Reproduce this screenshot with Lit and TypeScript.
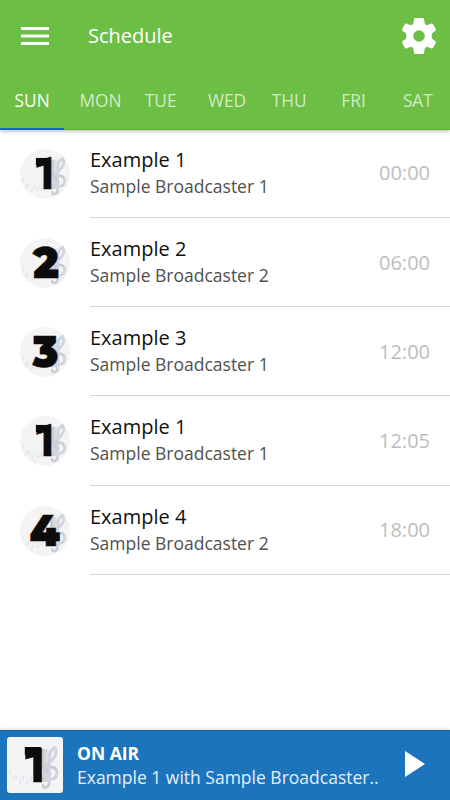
import { LitElement, html, css, svg, nothing } from "lit";
import { customElement, property } from "lit/decorators.js";

interface Show {
  art: string;
  title: string;
  host: string;
  time: string;
}

const SHOWS: Show[] = [
  { art: "1", title: "Example 1", host: "Sample Broadcaster 1", time: "00:00" },
  { art: "2", title: "Example 2", host: "Sample Broadcaster 2", time: "06:00" },
  { art: "3", title: "Example 3", host: "Sample Broadcaster 1", time: "12:00" },
  { art: "1", title: "Example 1", host: "Sample Broadcaster 1", time: "12:05" },
  { art: "4", title: "Example 4", host: "Sample Broadcaster 2", time: "18:00" },
];

const DAYS = ["SUN", "MON", "TUE", "WED", "THU", "FRI", "SAT"];

// Horizontal placement of each numeral inside the 56-unit artwork.
const NUMERALS: Record<string, { x: number; width: number }> = {
  "1": { x: 14.5, width: 28.6 },
  "2": { x: 14.5, width: 29 },
  "3": { x: 14, width: 29 },
  "4": { x: 10.5, width: 34 },
};

@customElement("cover-art")
export class CoverArt extends LitElement {
  @property() label = "1";

  static styles = css`
    :host { display: block; background: #f4f4f5; }
    svg { display: block; width: 100%; height: 100%; overflow: visible; }
    .numeral {
      font: 900 49px Montserrat, Inter, "Open Sans", sans-serif;
      fill: #0c0c0c;
      stroke: #0c0c0c;
      stroke-width: 0.4;
    }
    .numeral.one { font-family: Roboto, sans-serif; }
    .flag { fill: #0c0c0c; }
    .clef { fill: none; stroke: #c9ccd6; stroke-linecap: round; stroke-linejoin: round; }
    .shine { fill: none; stroke: #dfe1ea; stroke-linecap: round; }
    .staff { fill: none; stroke: #e9eaf0; stroke-width: 0.4; }
    .note { fill: #dadce6; }
  `;

  render() {
    const n = NUMERALS[this.label];
    const one = this.label === "1";
    return html`<svg viewBox="0 0 56 56">
      <defs>
        <linearGradient id="shade">
          <stop offset="0" stop-color="#c0c0c0" />
          <stop offset="1" stop-color="#f4f4f5" />
        </linearGradient>
      </defs>
      <rect x="34" y="12" width="10" height="33" fill="url(#shade)" />
      <path class="staff" d="M3 35q8 8 20 4M3 37q8 8 22 4M4 39q8 7 22 5M5 41q8 6 22 5" />
      ${[[3, 36], [6.500, 43], [9, 41], [13, 47], [16, 42], [20, 46], [24, 43]].map(
        ([x, y]) => svg`<g class="note"><ellipse cx=${x} cy=${y} rx="1" ry=".8" /><rect x=${x + 0.5} y=${y - 4} width=".5" height="4" /></g>`
      )}
      <path class="clef" stroke-width="2.8" d="M36 48.500q0 2.500 2.500 2q4-.8 3.500-5L42.500 19q.5-6 5.200-8.500q3 5-.7 10q-3 4-6.500 6.500q-6.500 6-4.500 11q2.500 5 8.500 4q6-1.500 5.500-7q-1-5-6-5q-4.500.8-4 4.500q.5 2.500 3 3" />
      <path class="shine" stroke-width=".8" d="M42 45L42.500 19q.5-6 5.200-8.500q3 5-.7 10q-3 4-6.500 6.500q-6.500 6-4.500 11q2.500 5 8.500 4q6-1.500 5.500-7" />
      <text class="numeral ${one ? "one" : ""}" x=${n.x} y="45" textLength=${n.width} lengthAdjust="spacingAndGlyphs">${this.label}</text>
      ${one ? svg`<rect class="flag" x="17.800" y="10" width="16" height="8" />` : nothing}
    </svg>`;
  }
}

@customElement("app-root")
export class AppRoot extends LitElement {
  static styles = css`
    :host {
      display: flex;
      flex-direction: column;
      width: 450px;
      height: 800px;
      background: #fff;
      font-family: "Open Sans", "Noto Sans", sans-serif;
      white-space: nowrap;
      overflow: hidden;
    }
    header {
      height: 130px;
      flex: none;
      box-sizing: border-box;
      background: #6dbe45;
      border-bottom: 1px solid #5bb424;
      box-shadow: 0 1px 4px rgba(60, 40, 80, 0.38);
      color: #fff;
      display: flex;
      flex-direction: column;
    }
    .bar { height: 72px; display: flex; align-items: center; padding: 0 14px 0 21px; }
    .menu { width: 28px; height: 20px; }
    .bar h1 { margin: 0 auto 0 39px; font-size: 20px; font-weight: 400; line-height: 28px; }
    .gear { width: 34px; height: 36px; }
    .tabs { flex: 1; display: grid; grid-template-columns: repeat(7, 1fr); }
    .tab {
      display: flex;
      justify-content: center;
      padding-top: 17px;
      font-size: 17.3px;
      line-height: 23px;
      color: rgba(255, 255, 255, 0.7);
    }
    .tab.mon { padding-left: 8px; }
    .tab.wed { padding-left: 4px; }
    .tab.active { color: #fff; border-bottom: 2px solid #1469bd; margin-bottom: -1px; }
    main { flex: 1; padding-left: 20px; }
    .row { height: 89.15px; display: flex; box-sizing: border-box; }
    .row cover-art { width: 50px; height: 50px; border-radius: 50%; margin: 19px 20px 0 0; flex: none; }
    .info {
      flex: 1;
      display: flex;
      align-items: flex-start;
      justify-content: space-between;
      border-bottom: 1px solid #d6d6d6;
      padding: 16px 20px 0 0;
      margin-bottom: 1px;
    }
    .title { font-size: 20px; line-height: 28px; color: #101010; }
    .host { font-size: 17.5px; line-height: 24px; color: #505050; }
    .time { font-size: 20px; line-height: 28px; color: #bdbdbd; margin-top: 13.4px; }
    footer {
      height: 70px;
      flex: none;
      box-sizing: border-box;
      background: #1c75bc;
      border-top: 1px solid #0862b0;
      box-shadow: 0 -1px 3px rgba(60, 50, 40, 0.16);
      display: flex;
      align-items: flex-start;
      padding: 6px 25px 0 7px;
      color: #fff;
    }
    footer cover-art { width: 56px; height: 56px; border-radius: 3px; margin-right: 14px; }
    .now { flex: 1; padding-top: 4px; }
    .status { font-size: 17.5px; font-weight: 700; line-height: 24px; }
    .track { font-size: 17.5px; line-height: 24px; color: #e4eef8; }
    .play { width: 20px; height: 26px; margin-top: 14px; }
  `;

  render() {
    return html`
      <header>
        <div class="bar">
          <svg class="menu" viewBox="0 0 28 20" fill="#fff"><path d="M0 1h28v3H0zM0 8.500h28v3H0zM0 16h28v3H0z" /></svg>
          <h1>Schedule</h1>
          <svg class="gear" viewBox="0 0 34 36" fill="#fff" fill-rule="evenodd">
            <path d="M13.200 0h7.600q1 0 1.200 1.200l.7 4q.2 1 1.200 1.500q1 .6 2 .2l3.500-1.300q1.100-.4 1.700.6l2.700 4.800q.6 1-.4 1.800l-2.900 2.300q-.8.600-.7 1.700v2.400q-.1 1.100.7 1.700l2.900 2.300q1 .8.400 1.800l-2.700 4.800q-.6 1-1.700.6l-3.500-1.300q-1-.4-2 .2q-1 .5-1.200 1.500l-.7 4q-.2 1.200-1.200 1.200h-7.600q-1 0-1.200-1.200l-.7-4q-.2-1-1.200-1.500q-1-.6-2-.2l-3.500 1.300q-1.100.4-1.700-.6l-2.700-4.800q-.6-1 .4-1.800l2.900-2.300q.8-.6.700-1.700v-2.400q.1-1.100-.7-1.700l-2.900-2.300q-1-.8-.4-1.800l2.700-4.800q.6-1 1.700-.6l3.500 1.300q1 .4 2-.2q1-.5 1.200-1.500l.7-4q.2-1.200 1.200-1.200zM17 12.200a5.800 5.800 0 1 0 0 11.600a5.800 5.800 0 1 0 0-11.600z" />
          </svg>
        </div>
        <nav class="tabs">
          ${DAYS.map((d, i) => html`<div class="tab ${d.toLowerCase()} ${i === 0 ? "active" : ""}">${d}</div>`)}
        </nav>
      </header>
      <main>
        ${SHOWS.map(
          (s) => html`<div class="row">
            <cover-art .label=${s.art}></cover-art>
            <div class="info">
              <div><div class="title">${s.title}</div><div class="host">${s.host}</div></div>
              <div class="time">${s.time}</div>
            </div>
          </div>`
        )}
      </main>
      <footer>
        <cover-art label="1"></cover-art>
        <div class="now">
          <div class="status">ON AIR</div>
          <div class="track">Example 1 with Sample Broadcaster..</div>
        </div>
        <svg class="play" viewBox="0 0 20 26" fill="#fff"><path d="M0 0L20 13L0 26z" /></svg>
      </footer>
    `;
  }
}
